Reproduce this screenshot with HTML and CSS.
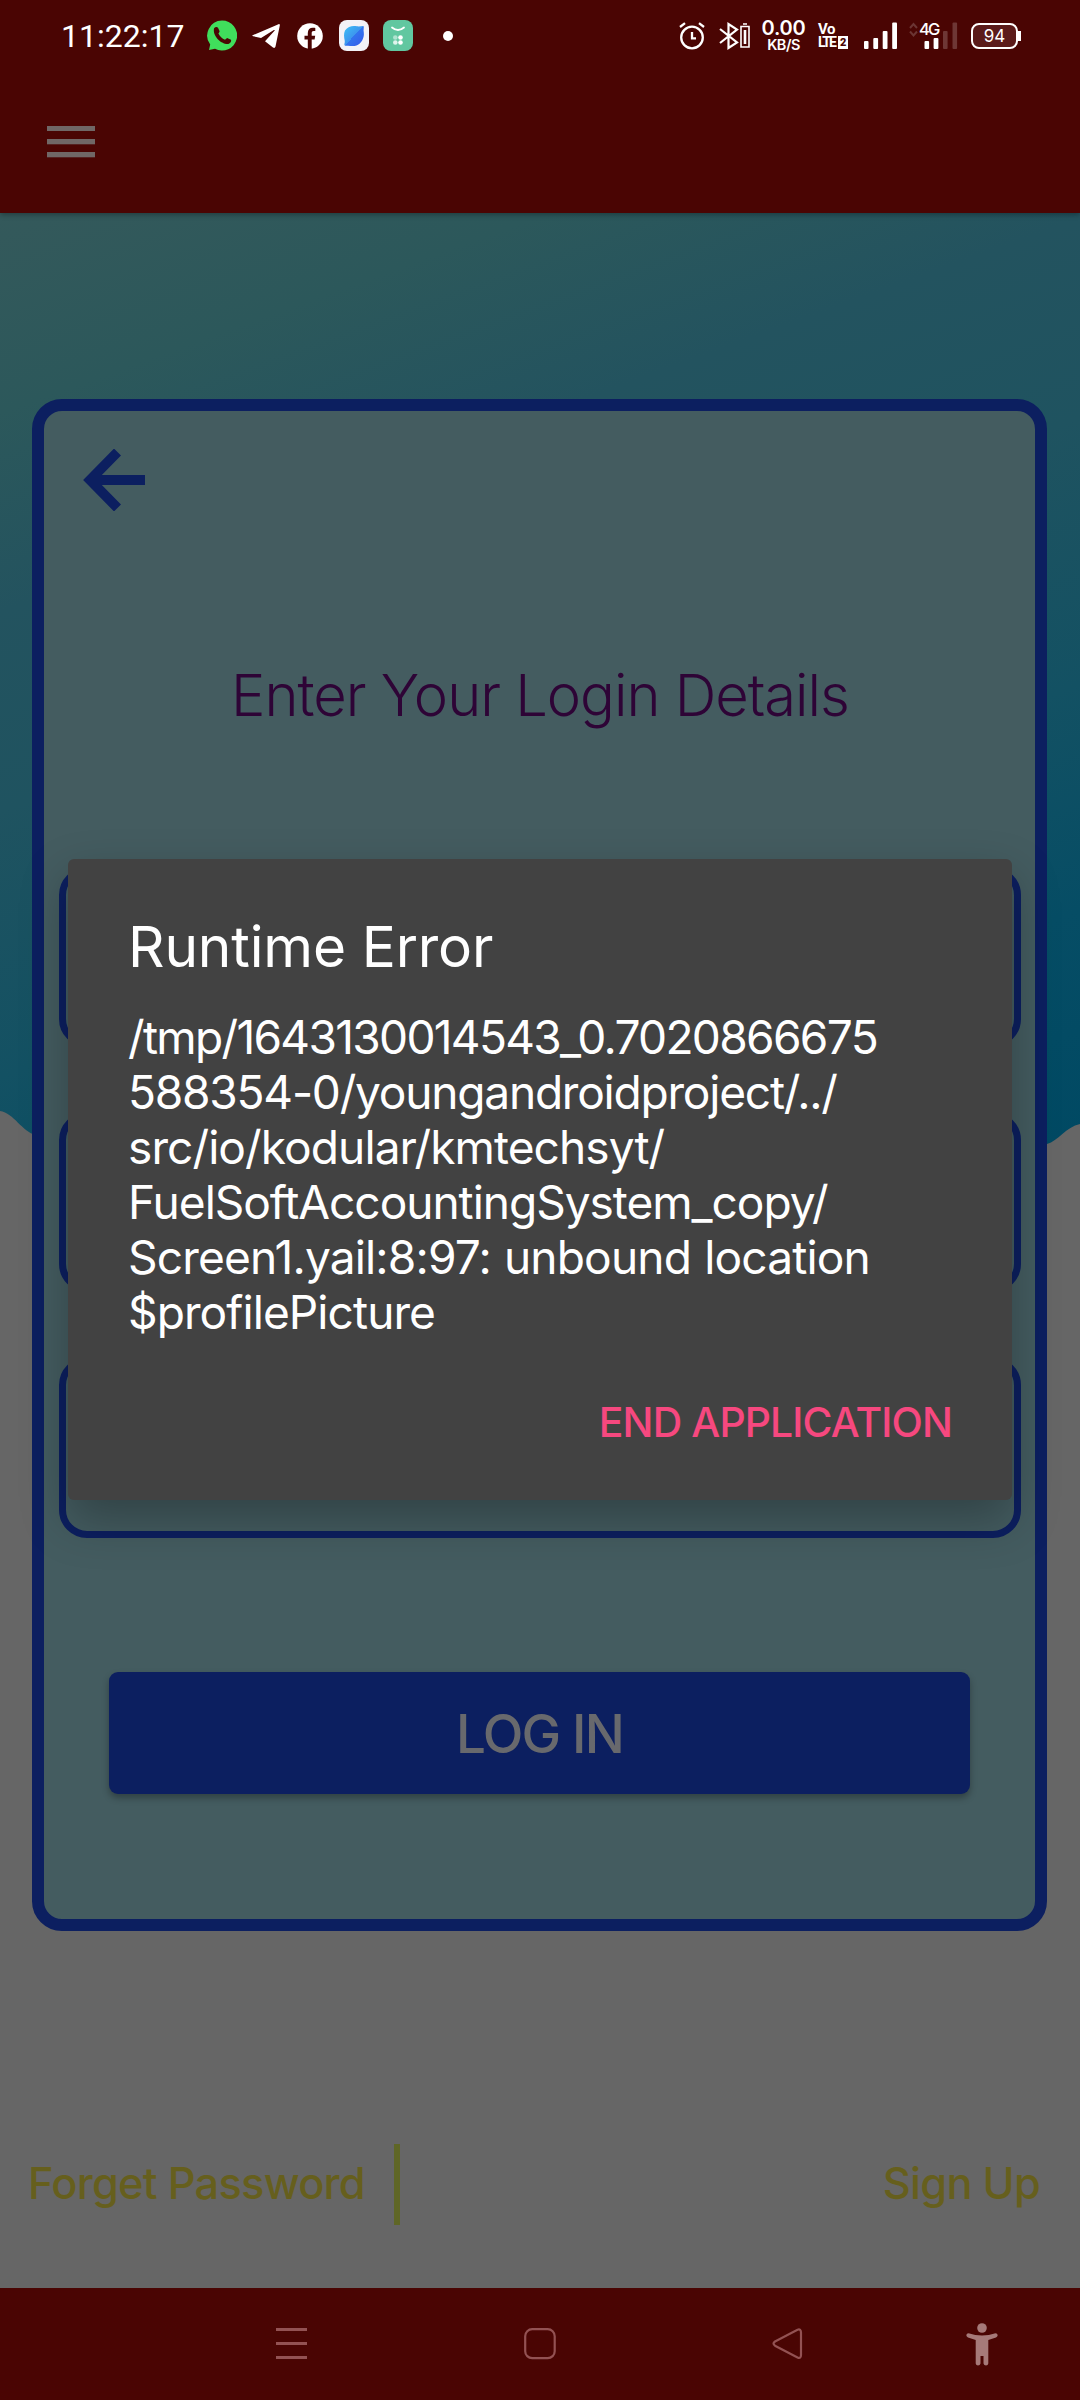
FILE: index.html
```
<!DOCTYPE html>
<html lang="en">
<head>
    <meta charset="UTF-8">
    <meta name="viewport" content="width=device-width, initial-scale=1.0">
    <title>Login</title>
    <link rel="stylesheet" href="styles.css">
</head>
<body>
    <div class="screen">
        <header class="header">
            <div class="status-bar">
                <span class="clock">11:22:17</span>
                <div class="notifications">
                    <svg width="30" height="31" viewBox="0 0 30 31">
                        <path d="M15 0.5a15 15 0 1 1-7 28.2L2 30l1.200-5.500A15 15 0 0 1 15 0.500z" fill="#40de5c"/>
                        <path d="M7 8.500c1-1.600 3-2 4-.7l1.500 3.200c.3 1-.6 1.800-1.100 2.500 1.400 3 3.700 5 6.600 6.200l2.100-1.800 3.900 1.900c.7 1.500-.8 3.600-2.600 4.200C14 24.500 5.500 16 7 8.500z" fill="#4a0503"/>
                    </svg>
                    <svg width="28" height="26" viewBox="0 0 28 26">
                        <path d="M1.200 12 26.500 1.200c1-.4 1.500.3 1.300 1.300L23.500 23.500c-.4 1.500-1.400 1.700-2.500 1l-8-6.200 9.500-10.500c.6-.8-.2-1-1-.5L9 15 1.200 13.200C0 13 0 12.500 1.200 12z" fill="#fff"/>
                    </svg>
                    <svg width="26" height="26" viewBox="0 0 26 26">
                        <circle cx="13" cy="13" r="12.800" fill="#fff"/>
                        <path d="M10.800 26v-9.500H7.500v-3.800h3.300V10c0-3.400 2-5.200 5-5.200 1.300 0 2.500.2 2.500.2v3h-1.600c-1.500 0-2 .9-2 1.900v2.800h3.500l-.6 3.800h-2.900V26z" fill="#4a0503"/>
                    </svg>
                    <svg width="30" height="31" viewBox="0 0 30 31">
                        <defs>
                            <linearGradient id="planet" x1="0" y1="0" x2="1" y2="1">
                                <stop offset="0" stop-color="#3cc0f5"/>
                                <stop offset=".5" stop-color="#3d95ee"/>
                                <stop offset=".5" stop-color="#3274ee"/>
                                <stop offset="1" stop-color="#3758e8"/>
                            </linearGradient>
                        </defs>
                        <rect width="30" height="31" rx="8" fill="#f3f2f7"/>
                        <path d="M6 10.500C9 6 14 5.500 18 6.300c3 .5 5-.6 6.500-.2.800 1.500-.4 3.600.3 6.400.8 6-3 11.500-7.300 13-3 1-6 .3-8.500.2-1.500.2-3 .3-3.500-.5-.6-1.200.7-2.700.2-4.700-.7-3.500-1.200-6.500.3-10z" fill="url(#planet)"/>
                    </svg>
                    <svg width="30" height="31" viewBox="0 0 30 31">
                        <rect width="30" height="31" rx="8" fill="#61c7a0"/>
                        <path d="M9 7.500q6 5 12 0" fill="none" stroke="#fff" stroke-width="1.800" stroke-linecap="round"/>
                        <g fill="#fff">
                            <circle cx="12.300" cy="17.500" r="2.300" opacity=".5"/>
                            <circle cx="17.500" cy="17.500" r="2.300"/>
                            <circle cx="12.300" cy="22.500" r="2.300" opacity=".8"/>
                            <circle cx="17.500" cy="22.500" r="2.300"/>
                        </g>
                    </svg>
                    <span class="more-dot"></span>
                </div>
                <div class="system-icons">
                    <svg width="26" height="28" viewBox="0 0 26 28" fill="none" stroke="#fff" stroke-width="2.300">
                        <circle cx="13" cy="15.500" r="10.800"/>
                        <path d="M13 10v6.300h4M1 5l5-3.800M25 5l-5-3.800"/>
                    </svg>
                    <svg width="31" height="28" viewBox="0 0 31 28" fill="none" stroke="#fff" stroke-width="2.200">
                        <path d="M1 7l17 13.500-8.500 5.500V2L18 7.500 1 21"/>
                        <path d="M22 4.500h8v20.500h-8zM24 2h4" stroke-width="1.600"/>
                        <path d="M26 8v14" stroke-width="2.600"/>
                    </svg>
                    <div class="net-speed">
                        <span class="rate">0.00</span>
                        <span class="unit">KB/S</span>
                    </div>
                    <div class="volte">
                        <span class="vo">Vo</span>
                        <span class="lte">LTE <b>2</b></span>
                    </div>
                    <svg width="34" height="28" viewBox="0 0 34 28" fill="#fff">
                        <rect x="0" y="19" width="4.500" height="8" rx="1"/>
                        <rect x="9.300" y="16" width="4.800" height="11" rx="1"/>
                        <rect x="18.700" y="9" width="4.800" height="18" rx="1"/>
                        <rect x="28.200" y="0.500" width="4.800" height="26.500" rx="1"/>
                    </svg>
                    <div class="mobile-net">
                        <svg width="49" height="28" viewBox="0 0 49 28">
                            <path d="M1 6l3.500-4L8 6M1 9.500l3.500 4 3.500-4" fill="none" stroke="#6b3533" stroke-width="2"/>
                            <g fill="#fff">
                                <rect x="15.500" y="19" width="4.600" height="8" rx="1"/>
                                <rect x="24.600" y="16" width="4.800" height="11" rx="1"/>
                                <rect x="34" y="9" width="4.600" height="18" rx="1" opacity=".2"/>
                                <rect x="43.500" y="0.500" width="4.600" height="26.500" rx="1" opacity=".2"/>
                            </g>
                        </svg>
                        <span class="gen">4G</span>
                    </div>
                    <div class="battery"><span class="level">94</span></div>
                </div>
            </div>
            <div class="toolbar">
                <svg class="menu-icon" width="48" height="32" viewBox="0 0 48 32" fill="#706766">
                    <rect y="0" width="48" height="5"/>
                    <rect y="13" width="48" height="5.300"/>
                    <rect y="26" width="48" height="5.300"/>
                </svg>
            </div>
        </header>

        <main class="content">
            <svg class="wave" width="1080" height="936" viewBox="0 0 1080 936" preserveAspectRatio="none">
                <path d="M0 898C14 900 22 919 36 922L200 936H1000L1047 931C1058 928 1066 914 1080 911V936H0z" fill="#666"/>
            </svg>

            <section class="card">
                <svg class="back" width="62" height="62" viewBox="0 0 62 62">
                    <path d="M62 31H12M34.500 3 7 31l27.500 28" fill="none" stroke="#0c1f60" stroke-width="9.800"/>
                </svg>
                <h1 class="card-title">Enter Your Login Details</h1>
                <div class="field"></div>
                <div class="field"></div>
                <div class="field last"></div>
                <button class="login-btn">LOG IN</button>
            </section>

            <div class="links">
                <a class="link forget">Forget Password</a>
                <span class="divider"></span>
                <a class="link sign-up">Sign Up</a>
            </div>
        </main>

        <nav class="nav-bar">
            <svg width="31" height="32" viewBox="0 0 31 32" fill="#935253">
                <rect width="31" height="3"/>
                <rect y="14" width="31" height="3"/>
                <rect y="28" width="31" height="3"/>
            </svg>
            <svg class="nav-home" width="32" height="32" viewBox="0 0 32 32">
                <rect x="1.200" y="1.200" width="29.500" height="29" rx="7" fill="none" stroke="#935253" stroke-width="2.200"/>
            </svg>
            <svg class="nav-back" width="31" height="32" viewBox="0 0 31 32">
                <path d="M3 13.500 25.500 1.700Q29 0.500 29 4.500V27Q29 31 25.500 29.500L3 17.700Q0 15.600 3 13.500z" fill="none" stroke="#935253" stroke-width="2.200"/>
            </svg>
            <svg class="nav-access" width="32" height="43" viewBox="0 0 32 43" fill="#a67a79">
                <circle cx="16" cy="5" r="4.800"/>
                <path d="M2.500 10.200Q16 15 29.500 10.200q2 0 2.200 2-.2 1.600-1.700 2.300L22.300 17v23.500q-.3 2-2.300 2t-2.500-2V33h-3v7.500q-.5 2-2.500 2t-2.300-2V17L2 14.500Q.5 13.800.3 12.200q.2-2 2.200-2z"/>
            </svg>
        </nav>

        <div class="dialog">
            <h2 class="dialog-title">Runtime Error</h2>
            <p class="dialog-message">
                <span class="line l1">/tmp/1643130014543_0.7020866675</span>
                <span class="line l2">588354-0/youngandroidproject/../</span>
                <span class="line l3">src/io/kodular/kmtechsyt/</span>
                <span class="line l4">FuelSoftAccountingSystem_copy/</span>
                <span class="line l5">Screen1.yail:8:97: unbound location</span>
                <span class="line l6">$profilePicture</span>
            </p>
            <button class="dialog-action">END APPLICATION</button>
        </div>
    </div>
</body>
</html>
```
FILE: styles.css
```
* {
    box-sizing: border-box;
}

body {
    margin: 0;
    font-family: Inter, Roboto, sans-serif;
    background-color: #666;
}

h1, h2, p {
    margin: 0;
    font-weight: 400;
}

button {
    border: none;
    background: none;
    padding: 0;
    font-family: inherit;
}

svg {
    display: block;
    flex-shrink: 0;
}

.screen {
    position: relative;
    width: 1080px;
    height: 2400px;
    display: flex;
    flex-direction: column;
    overflow: hidden;
}

/* Header */
.header {
    position: relative;
    z-index: 1;
    height: 213px;
    background-color: #4a0503;
    box-shadow: 0 2px 5px rgba(0, 0, 0, 0.3);
}

.status-bar {
    display: flex;
    align-items: center;
    height: 71px;
    padding-left: 61px;
    padding-right: 59px;
    color: #fff;
}

.clock {
    width: 146px;
    font-family: Roboto, sans-serif;
    font-size: 32px;
    white-space: nowrap;
}

.notifications {
    display: flex;
    align-items: center;
}

.notifications svg {
    margin-right: 15px;
}

.notifications svg:nth-child(2) {
    margin-right: 17px;
}

.notifications svg:nth-child(3) {
    margin-right: 16px;
}

.notifications svg:nth-child(4) {
    margin-right: 14px;
}

.more-dot {
    width: 10px;
    height: 10px;
    margin-left: 15px;
    border-radius: 50%;
    background-color: #fff;
}

.system-icons {
    display: flex;
    align-items: center;
    margin-left: auto;
}

.system-icons > svg:nth-child(1) {
    margin-right: 14px;
}

.net-speed {
    width: 45px;
    margin: 0 12px 0 11px;
    display: flex;
    flex-direction: column;
    align-items: center;
    font-weight: 600;
    white-space: nowrap;
}

.rate {
    font-size: 20px;
    line-height: 18px;
    letter-spacing: -0.2px;
}

.unit {
    font-size: 14.5px;
    line-height: 15px;
    letter-spacing: -0.5px;
}

.volte {
    width: 32px;
    margin-right: 14px;
    display: flex;
    flex-direction: column;
    font-family: Roboto, sans-serif;
    font-weight: 700;
    white-space: nowrap;
}

.vo {
    font-size: 15px;
    line-height: 14px;
    letter-spacing: -0.4px;
}

.lte {
    display: flex;
    gap: 3px;
    font-size: 14px;
    line-height: 13px;
    letter-spacing: -1.8px;
}

.lte b {
    width: 10px;
    background-color: #fff;
    color: #4a0503;
    font-size: 11px;
    text-align: center;
    letter-spacing: 0;
}

.mobile-net {
    position: relative;
    margin-left: 11px;
    margin-right: 13px;
}

.gen {
    position: absolute;
    left: 10px;
    top: 0;
    font-size: 16.5px;
    line-height: 14px;
    font-weight: 500;
    letter-spacing: -1.8px;
}

.battery {
    position: relative;
    width: 47px;
    height: 26px;
    margin-right: 3px;
    border: 2px solid #fff;
    border-radius: 8px;
    background-color: #5b1b1a;
    text-align: center;
}

.battery::after {
    content: "";
    position: absolute;
    right: -5px;
    top: 6px;
    width: 3px;
    height: 10px;
    background-color: #fff;
}

.level {
    display: block;
    font-size: 17px;
    line-height: 22px;
}

.toolbar {
    padding: 55px 47px;
}

/* Main content */
.content {
    position: relative;
    height: 2075px;
    background: linear-gradient(160deg, #34595b 0%, #2c585b 15%, #23535f 30%, #1f5360 45%, #135163 65%, #064d65 82%, #004963 100%) no-repeat;
    background-size: 1080px 936px;
}

.wave {
    position: absolute;
    left: 0;
    top: 0;
}

.card {
    position: relative;
    top: 186px;
    display: flex;
    flex-direction: column;
    height: 1532px;
    margin: 0 33px 0 32px;
    padding: 38px 14px 0 15px;
    border: 12px solid #0c1f60;
    border-radius: 30px;
    background-color: #445c60;
}

.back {
    margin-left: 24px;
}

.card-title {
    margin-top: 149px;
    margin-bottom: 137px;
    text-align: center;
    font-size: 57.8px;
    font-weight: 300;
    line-height: 70px;
    letter-spacing: -1px;
    color: #2e0436;
}

.field {
    flex-shrink: 0;
    height: 180px;
    margin-bottom: 65px;
    border: 7px solid #0c1f60;
    border-radius: 28px;
}

.last {
    height: 181px;
}

.login-btn {
    height: 122px;
    margin: 69px 51px 0 50px;
    padding-top: 2px;
    border-radius: 9px;
    background-color: #0c1f60;
    box-shadow: 0 4px 7px rgba(0, 0, 0, 0.3);
    color: #68696d;
    font-size: 53px;
    font-weight: 500;
    letter-spacing: -1.7px;
}

.links {
    display: flex;
    align-items: center;
    height: 81px;
    margin-top: 399px;
    padding: 0 40px 0 28px;
}

.link {
    margin-bottom: 3px;
    color: #665f1d;
    font-size: 43.3px;
    font-weight: 500;
    line-height: 60px;
    letter-spacing: -0.7px;
}

.forget {
    width: 366px;
}

.divider {
    width: 6px;
    height: 81px;
    background-color: #5f6626;
}

.sign-up {
    margin-left: auto;
}

/* Navigation bar */
.nav-bar {
    display: flex;
    align-items: center;
    height: 112px;
    padding-left: 276px;
    background-color: #4a0503;
}

.nav-home {
    margin-left: 217px;
}

.nav-back {
    margin-left: 216px;
}

.nav-access {
    margin-left: 163px;
}

/* Error dialog */
.dialog {
    position: absolute;
    left: 68px;
    top: 859px;
    z-index: 2;
    display: flex;
    flex-direction: column;
    width: 944px;
    height: 641px;
    padding: 53px 60px 0 60px;
    border-radius: 6px;
    background-color: #424242;
    box-shadow: 0 20px 48px rgba(0, 0, 0, 0.28);
    color: #fff;
}

.dialog-title {
    font-size: 56.8px;
    line-height: 70px;
    letter-spacing: -0.15px;
}

.dialog-message {
    margin-top: 28px;
    font-size: 46.1px;
    line-height: 55px;
}

.line {
    display: block;
    white-space: nowrap;
}

.l1 {
    letter-spacing: -1.7px;
}

.l2 {
    letter-spacing: -1.24px;
}

.l3, .l6 {
    letter-spacing: -0.93px;
}

.l4 {
    letter-spacing: -1.05px;
}

.l5 {
    letter-spacing: -0.85px;
    word-spacing: 1px;
}

.dialog-action {
    align-self: flex-end;
    margin-top: 57px;
    color: #f6487f;
    font-size: 40.9px;
    font-weight: 500;
    line-height: 50px;
    letter-spacing: -0.88px;
}
```
